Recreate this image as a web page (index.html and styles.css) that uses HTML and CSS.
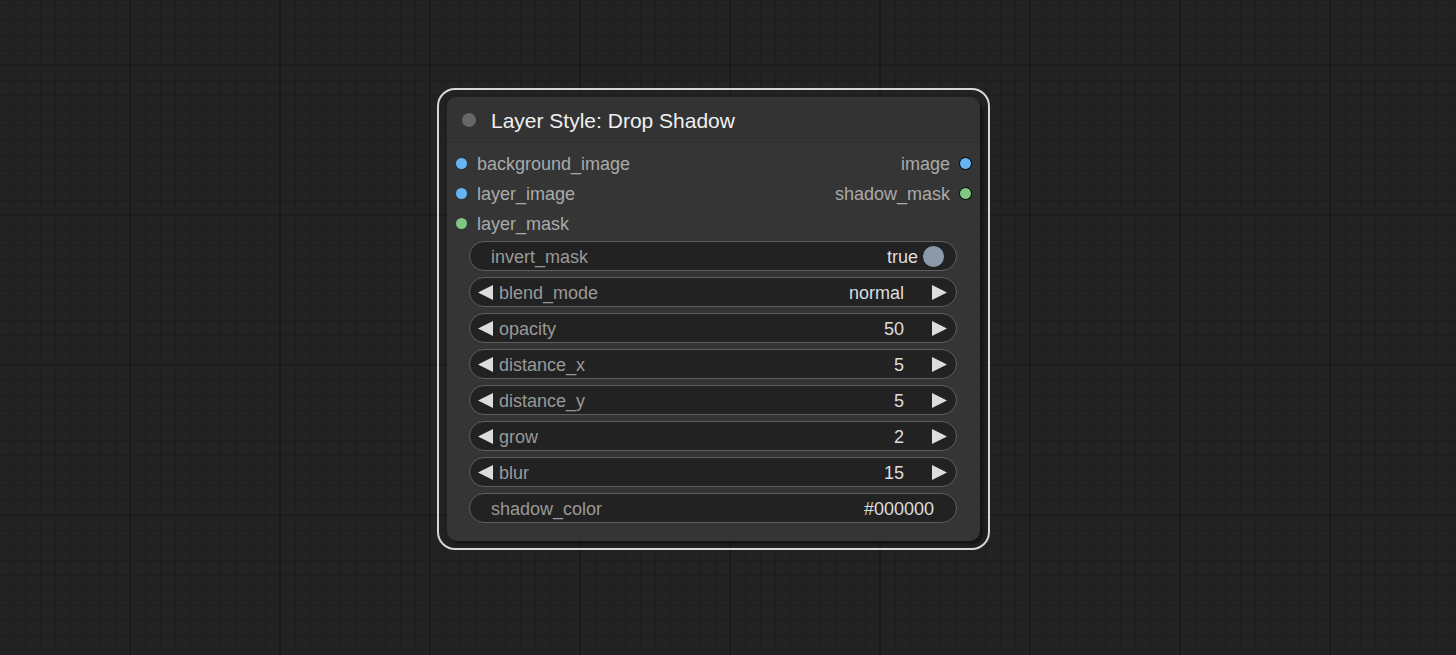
FILE: index.html
```html
<!DOCTYPE html>
<html>
<head>
<meta charset="utf-8">
<link rel="stylesheet" href="styles.css">
</head>
<body>
<div class="canvas">
  <div class="selection">
    <div class="node">
      <div class="title">
        <span class="title-dot"></span>
        <span class="title-text">Layer Style: Drop Shadow</span>
      </div>
      <div class="body">
        <div class="slots">
          <div class="slot-row">
            <div class="in"><span class="dot blue"></span><span class="slabel">background_image</span></div>
            <div class="out"><span class="slabel">image</span><span class="dot blue outline"></span></div>
          </div>
          <div class="slot-row">
            <div class="in"><span class="dot blue"></span><span class="slabel">layer_image</span></div>
            <div class="out"><span class="slabel">shadow_mask</span><span class="dot green outline"></span></div>
          </div>
          <div class="slot-row">
            <div class="in"><span class="dot green"></span><span class="slabel">layer_mask</span></div>
          </div>
        </div>
        <div class="widgets">
          <div class="widget toggle">
            <span class="wlabel">invert_mask</span>
            <span class="wval">true</span>
            <span class="knob"></span>
          </div>
          <div class="widget num">
            <svg class="arr" width="15" height="15" viewBox="0 0 15 15"><polygon points="15,0 15,15 0,7.5"/></svg>
            <span class="wlabel">blend_mode</span>
            <span class="wval">normal</span>
            <svg class="arr" width="15" height="15" viewBox="0 0 15 15"><polygon points="0,0 0,15 15,7.5"/></svg>
          </div>
          <div class="widget num">
            <svg class="arr" width="15" height="15" viewBox="0 0 15 15"><polygon points="15,0 15,15 0,7.5"/></svg>
            <span class="wlabel">opacity</span>
            <span class="wval">50</span>
            <svg class="arr" width="15" height="15" viewBox="0 0 15 15"><polygon points="0,0 0,15 15,7.5"/></svg>
          </div>
          <div class="widget num">
            <svg class="arr" width="15" height="15" viewBox="0 0 15 15"><polygon points="15,0 15,15 0,7.5"/></svg>
            <span class="wlabel">distance_x</span>
            <span class="wval">5</span>
            <svg class="arr" width="15" height="15" viewBox="0 0 15 15"><polygon points="0,0 0,15 15,7.5"/></svg>
          </div>
          <div class="widget num">
            <svg class="arr" width="15" height="15" viewBox="0 0 15 15"><polygon points="15,0 15,15 0,7.5"/></svg>
            <span class="wlabel">distance_y</span>
            <span class="wval">5</span>
            <svg class="arr" width="15" height="15" viewBox="0 0 15 15"><polygon points="0,0 0,15 15,7.5"/></svg>
          </div>
          <div class="widget num">
            <svg class="arr" width="15" height="15" viewBox="0 0 15 15"><polygon points="15,0 15,15 0,7.5"/></svg>
            <span class="wlabel">grow</span>
            <span class="wval">2</span>
            <svg class="arr" width="15" height="15" viewBox="0 0 15 15"><polygon points="0,0 0,15 15,7.5"/></svg>
          </div>
          <div class="widget num">
            <svg class="arr" width="15" height="15" viewBox="0 0 15 15"><polygon points="15,0 15,15 0,7.5"/></svg>
            <span class="wlabel">blur</span>
            <span class="wval">15</span>
            <svg class="arr" width="15" height="15" viewBox="0 0 15 15"><polygon points="0,0 0,15 15,7.5"/></svg>
          </div>
          <div class="widget text">
            <span class="wlabel">shadow_color</span>
            <span class="wval">#000000</span>
          </div>
        </div>
      </div>
    </div>
  </div>
</div>
</body>
</html>
```
FILE: styles.css
```css
html, body {
  margin: 0;
  padding: 0;
  width: 1456px;
  height: 655px;
  overflow: hidden;
}

body {
  font-family: "Liberation Sans", Arial, sans-serif;
}

.canvas {
  position: relative;
  width: 1456px;
  height: 655px;
  background-color: #222222;
  background-image:
    linear-gradient(to right, #1a1a1a 2px, transparent 2px),
    linear-gradient(to bottom, #1d1d1d 2px, transparent 2px),
    linear-gradient(to right, #1d1d1d 1px, transparent 1px),
    linear-gradient(to bottom, #1d1d1d 1px, transparent 1px);
  background-size: 150px 150px, 150px 150px, 15px 15px, 15px 15px;
  background-position: 129px 0, 0 64px, 10px 0, 0 5px;
}

.selection {
  position: absolute;
  left: 437px;
  top: 88px;
  width: 533px;
  height: 444px;
  border: 2px solid #d6d6d6;
  border-radius: 18px;
  padding: 7px 8px 7px 8px;
  box-sizing: content-box;
}

.node {
  width: 533px;
  height: 444px;
  background: #353535;
  border-radius: 10px;
  box-shadow: 3px 3px 3px rgba(0, 0, 0, 0.45);
  display: flex;
  flex-direction: column;
}

.title {
  height: 46px;
  box-sizing: border-box;
  background: #333333;
  border-bottom: 1px solid #2c2c2c;
  border-radius: 10px 10px 0 0;
  display: flex;
  align-items: center;
  padding-left: 15px;
}

.title-dot {
  width: 14px;
  height: 14px;
  border-radius: 50%;
  background: #666666;
}

.title-text {
  margin-left: 15px;
  padding-top: 2px;
  font-size: 21px;
  color: #f0f0f0;
  line-height: 24px;
}

.body {
  padding-top: 5px;
  display: flex;
  flex-direction: column;
}

.slots {
  display: flex;
  flex-direction: column;
}

.slot-row {
  height: 30px;
  display: flex;
  align-items: center;
  justify-content: space-between;
}

.in {
  display: flex;
  align-items: center;
  padding-left: 9px;
}

.out {
  display: flex;
  align-items: center;
  padding-right: 8px;
}

.dot {
  width: 11px;
  height: 11px;
  border-radius: 50%;
  box-sizing: border-box;
}

.dot.blue { background: #64b5f6; }
.dot.green { background: #81c784; }
.dot.outline { border: 1px solid #000; width: 13px; height: 13px; }

.in .slabel { margin-left: 10px; }
.out .slabel { margin-right: 9px; }

.slabel {
  font-size: 18px;
  color: #aaaaaa;
  line-height: 20px;
  padding-top: 2px;
}

.widgets {
  margin-top: 3px;
  display: flex;
  flex-direction: column;
  gap: 6px;
  padding: 0 23px 0 22px;
}

.widget {
  height: 30px;
  box-sizing: border-box;
  border: 1px solid #5e5e5e;
  border-radius: 15px;
  background: #222222;
  display: flex;
  align-items: center;
  font-size: 18px;
  line-height: 20px;
}

.wlabel {
  color: #999999;
  flex: 1;
  padding-top: 1px;
}

.wval {
  color: #dddddd;
  padding-top: 1px;
}

.arr {
  fill: #dddddd;
  display: block;
}

.num {
  padding: 0 9px 0 8px;
}

.num .wlabel { margin-left: 6px; }
.num .wval { margin-right: 28px; }

.toggle {
  padding: 0 12px 0 21px;
}

.knob {
  width: 21px;
  height: 21px;
  border-radius: 50%;
  background: #8b9aab;
  margin-left: 5px;
}

.text {
  padding: 0 22px 0 21px;
}
```
